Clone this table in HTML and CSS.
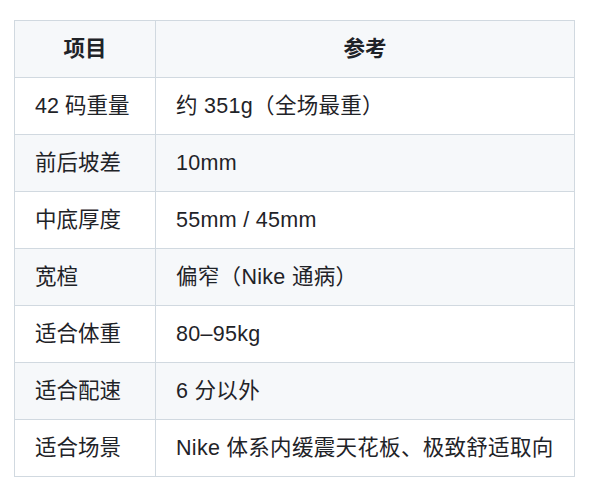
FILE: index.html
```html
<!DOCTYPE html>
<html lang="zh-CN">
<head>
<meta charset="utf-8">
<link rel="stylesheet" href="styles.css">
</head>
<body>
<table class="spec">
  <thead>
    <tr><th class="c1">项目</th><th class="c2">参考</th></tr>
  </thead>
  <tbody>
    <tr><td>42 码重量</td><td>约 351g（全场最重）</td></tr>
    <tr><td>前后坡差</td><td>10mm</td></tr>
    <tr><td>中底厚度</td><td>55mm / 45mm</td></tr>
    <tr><td>宽楦</td><td>偏窄（Nike 通病）</td></tr>
    <tr><td>适合体重</td><td>80–95kg</td></tr>
    <tr><td>适合配速</td><td>6 分以外</td></tr>
    <tr><td>适合场景</td><td>Nike 体系内缓震天花板、极致舒适取向</td></tr>
  </tbody>
</table>
</body>
</html>
```
FILE: styles.css
```css
html, body {
  margin: 0;
  padding: 0;
  background: #ffffff;
}
body {
  font-family: "Liberation Sans", "Noto Sans CJK SC", sans-serif;
  color: #1f2328;
  font-size: 21.5px;
}
.spec {
  border-collapse: collapse;
  margin: 20px 0 0 14px;
  width: 561px;
  table-layout: fixed;
}
.spec th, .spec td {
  border: 1px solid #d1d9e0;
  padding: 12px 20px;
  line-height: 32px;
  height: 32px;
  white-space: nowrap;
  text-align: left;
  font-weight: normal;
}
.spec th {
  font-weight: bold;
  text-align: center;
  background: #f6f8fa;
}
.spec td:last-child {
  letter-spacing: 0.3px;
}
.spec .c1 { width: 100px; }
.spec tbody tr:nth-child(even) td {
  background: #f6f8fa;
}
```
